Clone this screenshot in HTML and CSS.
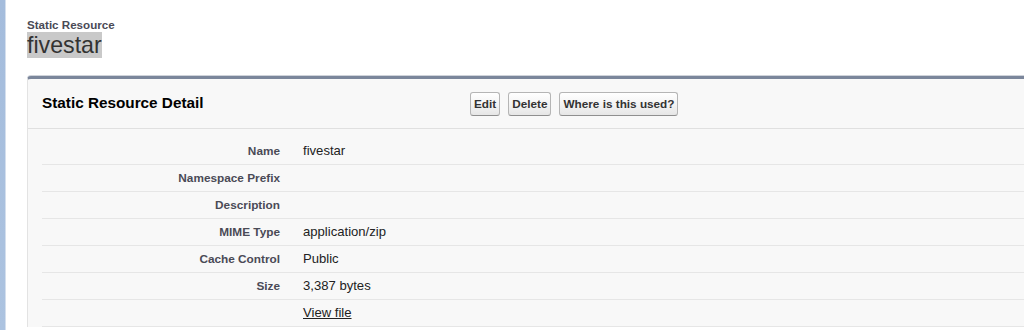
FILE: index.html
```
<!DOCTYPE html>
<html lang="en">

<head>
    <meta charset="UTF-8">
    <title>Static Resource: fivestar</title>
    <link rel="stylesheet" href="styles.css">
</head>

<body>
    <div class="page">
        <div class="sidebar"></div>
        <div class="content">
            <div class="page-header">
                <div class="page-header__type">Static Resource</div>
                <h1 class="page-header__name"><span class="page-header__hl">fivestar</span></h1>
            </div>

            <div class="block">
                <div class="block__header">
                    <h2 class="block__title">Static Resource Detail</h2>
                    <div class="btn-group">
                        <button class="btn" type="button">Edit</button>
                        <button class="btn" type="button">Delete</button>
                        <button class="btn" type="button">Where is this used?</button>
                    </div>
                </div>
                <div class="block__body">
                    <div class="detail-row">
                        <div class="detail-row__label">Name</div>
                        <div class="detail-row__value">fivestar</div>
                    </div>
                    <div class="detail-row">
                        <div class="detail-row__label">Namespace Prefix</div>
                        <div class="detail-row__value"></div>
                    </div>
                    <div class="detail-row">
                        <div class="detail-row__label">Description</div>
                        <div class="detail-row__value"></div>
                    </div>
                    <div class="detail-row">
                        <div class="detail-row__label">MIME Type</div>
                        <div class="detail-row__value">application/zip</div>
                    </div>
                    <div class="detail-row">
                        <div class="detail-row__label">Cache Control</div>
                        <div class="detail-row__value">Public</div>
                    </div>
                    <div class="detail-row">
                        <div class="detail-row__label">Size</div>
                        <div class="detail-row__value">3,387 bytes</div>
                    </div>
                    <div class="detail-row">
                        <div class="detail-row__label"></div>
                        <div class="detail-row__value"><a href="#">View file</a></div>
                    </div>
                </div>
            </div>
        </div>
    </div>
</body>

</html>
```

FILE: styles.css
```
* {
    border: 0;
    box-sizing: border-box;
    margin: 0;
    padding: 0;
}

:root {
    --label: #4a4a56;
    --line: #e6e6e6;
    --panel: #f8f8f8;
}

body {
    background: #fff;
    color: #000;
    font: 13px/1.2 "Liberation Sans", Arial, sans-serif;
    overflow: hidden;
}

.page {
    display: flex;
    min-height: 100vh;
}

.sidebar {
    background: linear-gradient(to bottom, #a4bcdc 0%, #acc3e0 100%);
    border-right: 1px solid #d4dfee;
    flex-shrink: 0;
    width: 6px;
}

.content {
    flex: 1;
    padding: 18px 0 0 21px;
}

.page-header__type {
    color: var(--label);
    font-size: 11.6px;
    font-weight: bold;
    line-height: 14px;
}

.page-header__name {
    color: #333;
    font-size: 23.2px;
    font-weight: normal;
    line-height: 26px;
}

.page-header__hl {
    background-color: #c9c9c9;
}

.block {
    background-color: var(--panel);
    border-left: 1px solid #e3e3e3;
    border-top: 3px solid #7b869b;
    border-top-left-radius: 4px;
    box-shadow: 0 -1px 0 #cfd3da;
    margin-top: 18px;
}

.block__header {
    align-items: center;
    border-bottom: 1px solid #e0e0e0;
    display: flex;
    height: 50px;
    padding-left: 14px;
}

.block__title {
    font-size: 15.3px;
    font-weight: bold;
    width: 428px;
}

.btn-group {
    display: flex;
    gap: 8px;
}

.btn {
    background: linear-gradient(to bottom, #fff 0%, #f4f4f4 50%, #e6e6e6 100%);
    border: 1px solid #b5b5b5;
    border-bottom-color: #8f8f8f;
    border-radius: 3px;
    color: #333;
    cursor: pointer;
    font: bold 11.75px/22px "Liberation Sans", Arial, sans-serif;
    height: 24px;
    padding: 0 3px;
}

.block__body {
    padding: 9px 0 0 14px;
}

.detail-row {
    border-bottom: 1px solid var(--line);
    display: grid;
    grid-template-columns: 238px 1fr;
    column-gap: 23px;
    height: 27px;
    line-height: 26px;
}

.detail-row__label {
    color: var(--label);
    font-size: 11.8px;
    font-weight: bold;
    text-align: right;
}

.detail-row__value {
    color: #222;
    font-size: 13.1px;
}

.detail-row__value a {
    color: #222;
    text-decoration: underline;
}
```
